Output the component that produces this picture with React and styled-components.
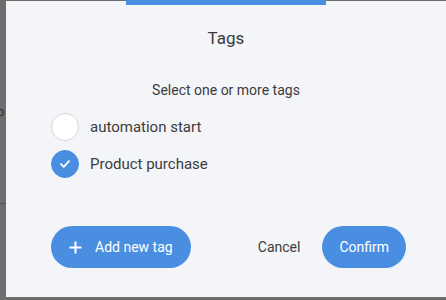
import React, { useState } from 'react';
import styled, { createGlobalStyle } from 'styled-components';

const GlobalStyle = createGlobalStyle`
  html, body {
    margin: 0;
    padding: 0;
    background: #6e6e6e;
    font-family: Roboto, "Liberation Sans", sans-serif;
  }
`;

const Backdrop = styled.div`
  position: relative;
  width: 446px;
  height: 300px;
  overflow: hidden;
  background: #6e6e6e;
`;

const PageHint = styled.div`
  position: absolute;
  left: -3px;
  top: 104px;
  font-size: 13px;
  color: #2c2c2c;
`;

const PageLine = styled.div`
  position: absolute;
  left: 0;
  top: 203px;
  width: 6px;
  height: 1px;
  background: #555;
`;

const Modal = styled.div`
  position: absolute;
  left: 6px;
  top: 1px;
  width: 440px;
  height: 296px;
  box-sizing: border-box;
  background: #f4f5f9;
  padding: 27px 40px 0 45px;
  display: flex;
  flex-direction: column;
`;

const TopBar = styled.div`
  position: absolute;
  top: -1px;
  left: 120px;
  width: 200px;
  height: 5px;
  background: #4a8ee2;
`;

const Title = styled.h2`
  margin: 0;
  text-align: center;
  font-size: 17px;
  font-weight: 400;
  line-height: 20px;
  color: #3a3a3a;
  padding-right: 5px;
`;

const Subtitle = styled.p`
  margin: 34px 0 0;
  text-align: center;
  font-size: 14px;
  line-height: 17px;
  color: #3c3c3c;
  padding-right: 5px;
`;

const Options = styled.div`
  margin-top: 14px;
  display: flex;
  flex-direction: column;
  gap: 9px;
`;

const Option = styled.label`
  display: flex;
  align-items: center;
  gap: 11px;
  font-size: 15px;
  color: #3c3c3c;
  cursor: pointer;
`;

const Circle = styled.span`
  width: 28px;
  height: 28px;
  box-sizing: border-box;
  border-radius: 50%;
  display: flex;
  align-items: center;
  justify-content: center;
  background: ${p => (p.$checked ? '#4a8ee2' : '#ffffff')};
  border: 1px solid ${p => (p.$checked ? '#4a8ee2' : '#d4d4d4')};
`;

const Footer = styled.div`
  margin-top: 48px;
  display: flex;
  align-items: center;
`;

const PillButton = styled.button`
  height: 42px;
  border: none;
  border-radius: 21px;
  background: #4a8ee2;
  color: #fff;
  font-family: inherit;
  font-size: 14px;
  display: flex;
  align-items: center;
  gap: 13px;
  padding: ${p => (p.$icon ? '0 18px 0 18px' : '0 17px')};
  cursor: pointer;
`;

const TextButton = styled.button`
  margin-left: auto;
  margin-right: 22px;
  border: none;
  background: transparent;
  font-family: inherit;
  font-size: 14px;
  color: #3c3c3c;
  padding: 0;
  cursor: pointer;
`;

const tags = [
  { name: 'automation start', checked: false },
  { name: 'Product purchase', checked: true },
];

export default function App() {
  const [items, setItems] = useState(tags);
  const toggle = i =>
    setItems(items.map((t, j) => (j === i ? { ...t, checked: !t.checked } : t)));

  return (
    <>
      <GlobalStyle />
      <Backdrop>
        <PageHint>b</PageHint>
        <PageLine />
        <Modal>
          <TopBar />
          <Title>Tags</Title>
          <Subtitle>Select one or more tags</Subtitle>
          <Options>
            {items.map((t, i) => (
              <Option key={t.name} onClick={() => toggle(i)}>
                <Circle $checked={t.checked}>
                  {t.checked && (
                    <svg width="12" height="10" viewBox="0 0 12 10">
                      <path d="M2 5.2 L4.8 7.8 L10 2.2" fill="none" stroke="#fff" strokeWidth="1.8" strokeLinecap="round" strokeLinejoin="round" />
                    </svg>
                  )}
                </Circle>
                {t.name}
              </Option>
            ))}
          </Options>
          <Footer>
            <PillButton $icon>
              <svg width="13" height="13" viewBox="0 0 13 13">
                <path d="M6.5 0.5 V12.5 M0.5 6.5 H12.5" stroke="#fff" strokeWidth="2" />
              </svg>
              Add new tag
            </PillButton>
            <TextButton>Cancel</TextButton>
            <PillButton>Confirm</PillButton>
          </Footer>
        </Modal>
      </Backdrop>
    </>
  );
}
